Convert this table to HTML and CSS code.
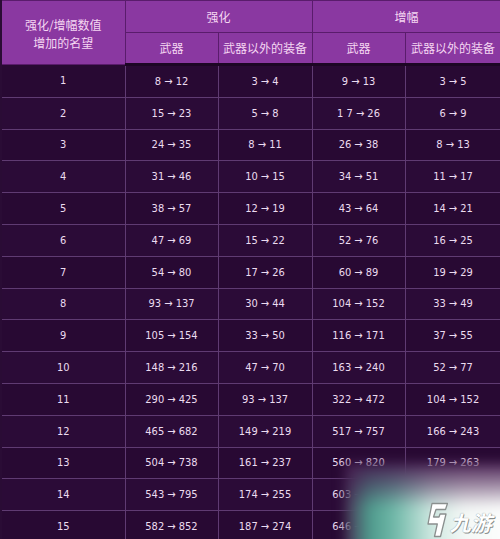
FILE: index.html
```html
<!DOCTYPE html>
<html>
<head>
<meta charset="utf-8">
<link rel="stylesheet" href="styles.css">
</head>
<body>
<div class="page">
<table class="grid">
<colgroup><col class="c0"><col class="c1"><col class="c2"><col class="c3"><col class="c4"></colgroup>
<thead>
<tr class="h1"><th rowspan="2" class="lead">强化/增幅数值<br>增加的名望</th><th colspan="2">强化</th><th colspan="2">增幅</th></tr>
<tr class="h2"><th>武器</th><th>武器以外的装备</th><th>武器</th><th>武器以外的装备</th></tr>
</thead>
<tbody>
<tr><td>1</td><td>8 → 12</td><td>3 → 4</td><td>9 → 13</td><td>3 → 5</td></tr>
<tr><td>2</td><td>15 → 23</td><td>5 → 8</td><td>1 7 → 26</td><td>6 → 9</td></tr>
<tr><td>3</td><td>24 → 35</td><td>8 → 11</td><td>26 → 38</td><td>8 → 13</td></tr>
<tr><td>4</td><td>31 → 46</td><td>10 → 15</td><td>34 → 51</td><td>11 → 17</td></tr>
<tr><td>5</td><td>38 → 57</td><td>12 → 19</td><td>43 → 64</td><td>14 → 21</td></tr>
<tr><td>6</td><td>47 → 69</td><td>15 → 22</td><td>52 → 76</td><td>16 → 25</td></tr>
<tr><td>7</td><td>54 → 80</td><td>17 → 26</td><td>60 → 89</td><td>19 → 29</td></tr>
<tr><td>8</td><td>93 → 137</td><td>30 → 44</td><td>104 → 152</td><td>33 → 49</td></tr>
<tr><td>9</td><td>105 → 154</td><td>33 → 50</td><td>116 → 171</td><td>37 → 55</td></tr>
<tr><td>10</td><td>148 → 216</td><td>47 → 70</td><td>163 → 240</td><td>52 → 77</td></tr>
<tr><td>11</td><td>290 → 425</td><td>93 → 137</td><td>322 → 472</td><td>104 → 152</td></tr>
<tr><td>12</td><td>465 → 682</td><td>149 → 219</td><td>517 → 757</td><td>166 → 243</td></tr>
<tr><td>13</td><td>504 → 738</td><td>161 → 237</td><td>560 → 820</td><td>179 → 263</td></tr>
<tr><td>14</td><td>543 → 795</td><td>174 → 255</td><td>603 → 884</td><td>193 → 283</td></tr>
<tr><td>15</td><td>582 → 852</td><td>187 → 274</td><td>646 → 947</td><td>207 → 303</td></tr>
</tbody>
</table>
<div class="wm">
  <div class="glow"></div>
  <div class="brand">
    <svg class="logo" width="24" height="36" viewBox="0 0 24 36">
      <path d="M8 1.5 L23.5 1.5 L21.5 7.5 L12 7.5 L9.5 15 L15 15 L16 12 L22 12 L16.5 34.5 L10.5 34.5 L13.3 22 L4 22 Z" fill="#ffffff" stroke="#8a8f8e" stroke-width="1.3" stroke-linejoin="round"/>
    </svg>
    <span class="name">九游</span>
  </div>
</div>
</div>
</body>
</html>
```

FILE: styles.css
```css
html, body {
  margin: 0;
  padding: 0;
  background: #2a0b36;
  overflow: hidden;
}
.page {
  position: relative;
  width: 500px;
  height: 539px;
  overflow: hidden;
}
.grid {
  border-collapse: collapse;
  table-layout: fixed;
  width: 501px;
  border-left: 2px solid #2a0c35;
}
.c0 { width: 124px; }
.c1 { width: 93px; }
.c2 { width: 94px; }
.c3 { width: 93px; }
.c4 { width: 96px; }
th {
  background: #8a38a1;
  color: #f5d6f2;
  font-family: "Noto Sans CJK SC", sans-serif;
  font-size: 12px;
  font-weight: normal;
  border: 1px solid #5a1c6c;
  padding: 0;
  line-height: 18px;
}
.h1 th { height: 31px; }
.h2 th { height: 30px; border-bottom: 3px solid #1c0624; }
.lead { padding-top: 2px; }
td {
  height: 30.8px;
  padding: 0;
  border: 1px solid #5f3b72;
  color: #ecdcf0;
  font-family: "DejaVu Sans Condensed", "DejaVu Sans", sans-serif;
  font-size: 11px;
  text-align: center;
  background: #2b0b37;
}
tbody tr:nth-child(odd) td { background: #280933; }
.wm {
  position: absolute;
  left: 345px;
  top: 463px;
  width: 175px;
  height: 90px;
}
.glow {
  position: absolute;
  left: 0;
  top: 0;
  width: 175px;
  height: 90px;
  background:
    linear-gradient(to bottom, rgba(70,28,80,0.95) 0%, rgba(70,28,80,0.5) 25%, rgba(70,28,80,0) 50%),
    linear-gradient(to right, #4a3256 0%, #4e9a8c 14%, #6fb8a8 28%, #cfe8e1 50%, #f4f8f6 68%, #ffffff 100%);
  filter: blur(6px);
}
.brand {
  position: absolute;
  left: 79px;
  top: 39px;
  display: flex;
  align-items: flex-end;
  gap: 4px;
}
.logo { display: block; }
.name {
  font-family: "Noto Sans CJK SC", sans-serif;
  font-weight: bold;
  font-size: 21px;
  line-height: 26px;
  color: #ffffff;
  transform: skewX(-14deg);
  text-shadow: 0 0 1px #7d8482, 1px 1px 0 #8a908e;
  margin-bottom: 3px;
}
```
